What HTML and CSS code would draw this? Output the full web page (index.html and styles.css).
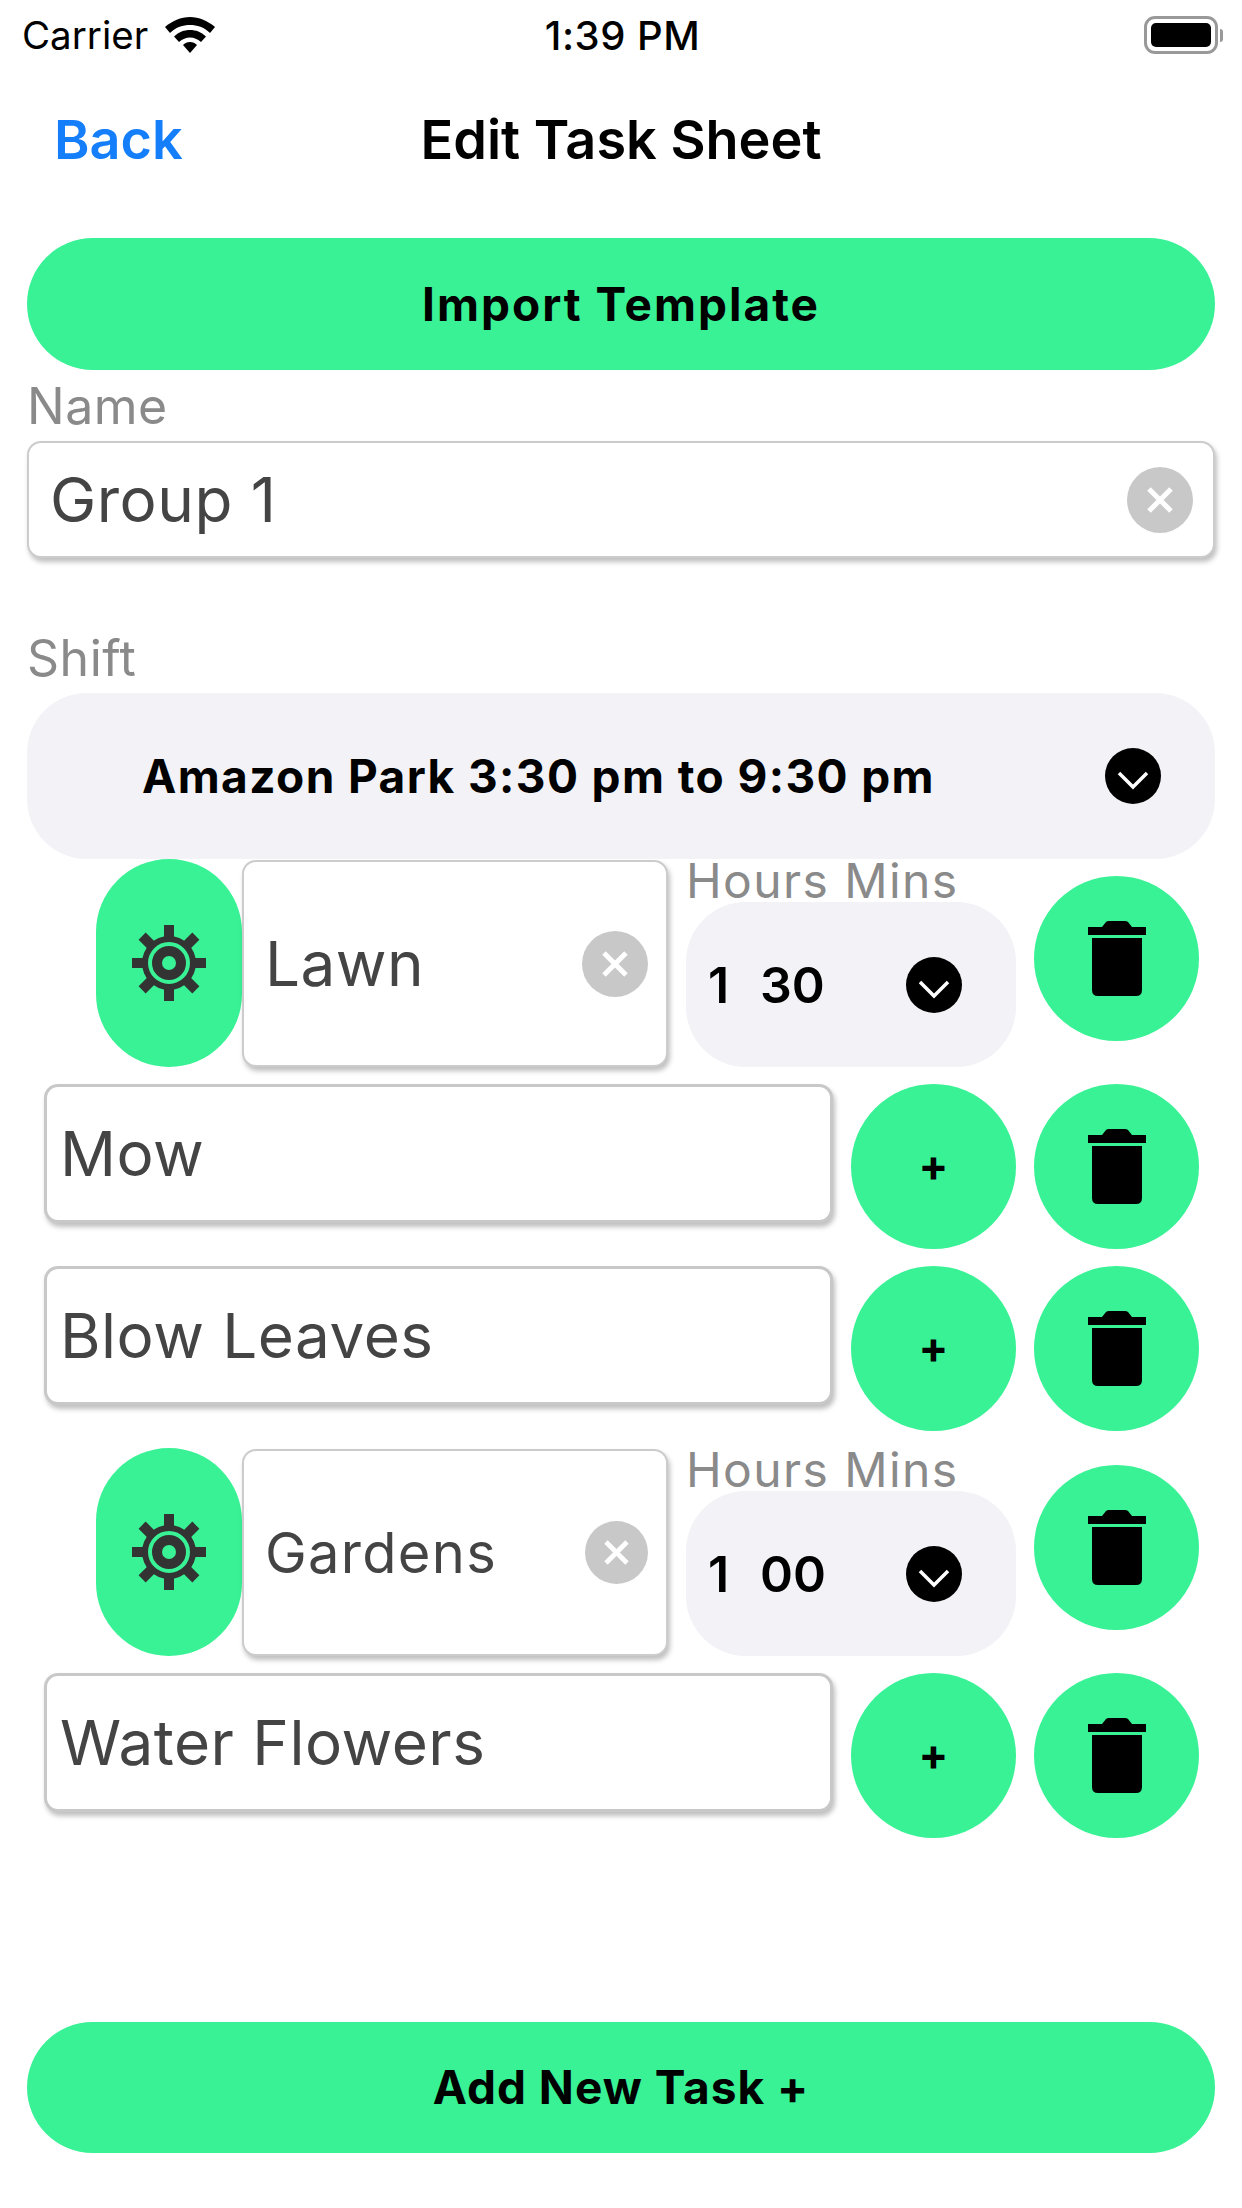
FILE: index.html
```html
<!DOCTYPE html>
<html lang="en">

<head>
    <meta charset="UTF-8">
    <meta name="viewport" content="width=device-width, initial-scale=1.0">
    <title>Edit Task Sheet</title>
    <link rel="stylesheet" href="styles.css">
</head>

<body>

    <svg class="iconDefs" aria-hidden="true">
        <symbol id="gear" viewBox="0 0 74 76">
            <g fill="#333333">
                <rect x="32" y="0" width="10" height="76"></rect>
                <rect x="32" y="0" width="10" height="76" transform="rotate(45 37 38)"></rect>
                <rect x="32" y="1" width="10" height="74" transform="rotate(90 37 38)"></rect>
                <rect x="32" y="0" width="10" height="76" transform="rotate(135 37 38)"></rect>
                <circle cx="37" cy="38" r="27"></circle>
            </g>
            <circle cx="37" cy="38" r="19" fill="none" stroke="#38f295" stroke-width="4"></circle>
            <circle cx="37" cy="38" r="7" fill="#38f295"></circle>
        </symbol>
        <symbol id="trash" viewBox="0 0 58 75">
            <path d="M0 6H14L18 1Q19 0 21 0H37Q39 0 40 1L44 6H58V14H0Z" fill="#000"></path>
            <path d="M4 17H54V69Q54 75 48 75H10Q4 75 4 69Z" fill="#000"></path>
        </symbol>
        <symbol id="chevron" viewBox="0 0 56 56">
            <circle cx="28" cy="28" r="28" fill="#000"></circle>
            <path d="M14 25L28 39L42 25" fill="none" stroke="#fff" stroke-width="3.500"></path>
        </symbol>
        <symbol id="clear" viewBox="0 0 66 66">
            <circle cx="33" cy="33" r="33" fill="#c8c8c8"></circle>
            <path d="M22 22L44 44M44 22L22 44" fill="none" stroke="#fff" stroke-width="5"></path>
        </symbol>
    </svg>

    <div class="statusBar">
        <div class="statusLeft">
            <span>Carrier</span>
            <svg class="wifiIcon" viewBox="0 0 50 36">
                <path d="M25 0C34 0 43 4 50 10L45 16C39 10 32 8 25 8C18 8 11 10 5 16L0 10C7 4 16 0 25 0Z"></path>
                <path d="M25 13C31 13 36 15 41 19.5L36 25C32.500 22 29 20.500 25 20.500C21 20.500 17.500 22 14 25L9 19.500C14 15 19 13 25 13Z"></path>
                <path d="M25 25C28 25 30 26 32 28L25 36L18 28C20 26 22 25 25 25Z"></path>
            </svg>
        </div>
        <div class="statusTime">1:39 PM</div>
        <div class="statusRight">
            <div class="battery"><div class="batteryFill"></div></div>
            <div class="batteryCap"></div>
        </div>
    </div>

    <div class="navBar">
        <a class="backLink">Back</a>
        <h1 class="navTitle">Edit Task Sheet</h1>
        <span></span>
    </div>

    <div class="content">
        <button class="pillButton">Import Template</button>

        <label class="fieldLabel">Name</label>
        <div class="textField nameField">
            <span>Group 1</span>
            <svg class="clearIcon"><use href="#clear"></use></svg>
        </div>

        <label class="fieldLabel shiftLabel">Shift</label>
        <div class="shiftSelect">
            <span>Amazon Park 3:30 pm to 9:30 pm</span>
            <svg class="chevronIcon"><use href="#chevron"></use></svg>
        </div>

        <div class="taskList">
            <div class="groupRow">
                <button class="gearButton"><svg class="gearIcon"><use href="#gear"></use></svg></button>
                <div class="textField groupField">
                    <span>Lawn</span>
                    <svg class="clearIcon"><use href="#clear"></use></svg>
                </div>
                <div class="timeBox">
                    <div class="timeLabel">Hours Mins</div>
                    <div class="timeSelect">
                        <span class="hours">1</span><span class="mins">30</span>
                        <svg class="chevronIcon"><use href="#chevron"></use></svg>
                    </div>
                </div>
                <button class="circleButton groupDelete"><svg class="trashIcon"><use href="#trash"></use></svg></button>
            </div>

            <div class="taskRow">
                <div class="textField taskField"><span>Mow</span></div>
                <button class="circleButton plusButton">+</button>
                <button class="circleButton"><svg class="trashIcon"><use href="#trash"></use></svg></button>
            </div>

            <div class="taskRow">
                <div class="textField taskField"><span>Blow Leaves</span></div>
                <button class="circleButton plusButton">+</button>
                <button class="circleButton"><svg class="trashIcon"><use href="#trash"></use></svg></button>
            </div>

            <div class="groupRow">
                <button class="gearButton"><svg class="gearIcon"><use href="#gear"></use></svg></button>
                <div class="textField groupField smallText">
                    <span>Gardens</span>
                    <svg class="clearIcon smallClear"><use href="#clear"></use></svg>
                </div>
                <div class="timeBox">
                    <div class="timeLabel">Hours Mins</div>
                    <div class="timeSelect">
                        <span class="hours">1</span><span class="mins">00</span>
                        <svg class="chevronIcon"><use href="#chevron"></use></svg>
                    </div>
                </div>
                <button class="circleButton groupDelete"><svg class="trashIcon"><use href="#trash"></use></svg></button>
            </div>

            <div class="taskRow">
                <div class="textField taskField"><span>Water Flowers</span></div>
                <button class="circleButton plusButton">+</button>
                <button class="circleButton"><svg class="trashIcon"><use href="#trash"></use></svg></button>
            </div>
        </div>

        <button class="pillButton addButton">Add New Task +</button>
    </div>

</body>

</html>
```

FILE: styles.css
```css
* {
    box-sizing: border-box;
}

body {
    font-family: 'Inter', 'Liberation Sans', sans-serif;
    background-color: #ffffff;
    color: #000000;
    width: 1242px;
    height: 2208px;
    margin: 0;
    display: flex;
    flex-direction: column;
    overflow: hidden;
}

button {
    font-family: inherit;
    border: none;
    padding: 0;
    color: #000000;
}

.iconDefs {
    position: absolute;
    width: 0;
    height: 0;
}

/* Status bar */
.statusBar {
    height: 70px;
    padding: 0 19px 0 22px;
    display: grid;
    grid-template-columns: 1fr auto 1fr;
    align-items: center;
    font-size: 38.5px;
}

.statusLeft {
    display: flex;
    align-items: center;
    gap: 17px;
}

.wifiIcon {
    width: 50px;
    height: 36px;
    fill: #000000;
}

.statusTime {
    font-size: 40px;
    font-weight: 500;
    letter-spacing: 0.5px;
}

.statusRight {
    display: flex;
    justify-content: flex-end;
    align-items: center;
    gap: 2px;
}

.battery {
    width: 74px;
    height: 38px;
    padding: 4px;
    border: 3px solid #999999;
    border-radius: 11px;
}

.batteryFill {
    height: 100%;
    background-color: #000000;
    border-radius: 5px;
}

.batteryCap {
    width: 3px;
    height: 13px;
    background-color: #999999;
    border-radius: 0 3px 3px 0;
}

/* Nav */
.navBar {
    height: 140px;
    margin-bottom: 28px;
    padding-bottom: 2px;
    display: grid;
    grid-template-columns: 1fr auto 1fr;
    align-items: center;
    font-size: 54px;
}

.backLink {
    padding-left: 54px;
    color: #147efb;
    font-weight: 600;
}

.navTitle {
    margin: 0;
    font-size: inherit;
    font-weight: 600;
}

/* Main column */
.content {
    flex: 1;
    padding: 0 27px 55px;
    display: flex;
    flex-direction: column;
}

.pillButton {
    height: 132px;
    flex-shrink: 0;
    border-radius: 66px;
    background-color: #38f295;
    font-size: 46px;
    font-weight: 700;
    letter-spacing: 2px;
}

.addButton {
    height: 131px;
    margin-top: auto;
    padding-bottom: 2px;
    letter-spacing: 1px;
}

.fieldLabel {
    height: 71px;
    display: flex;
    align-items: center;
    color: #8a8a8a;
    font-size: 50px;
    letter-spacing: 0.5px;
}

.shiftLabel {
    height: 70px;
    margin-top: 65px;
}

.textField {
    display: flex;
    align-items: center;
    justify-content: space-between;
    background-color: #ffffff;
    border: 2px solid #cccccc;
    border-radius: 14px;
    box-shadow: 2px 4px 5px rgba(0, 0, 0, 0.25);
    color: #444444;
    font-size: 62px;
    letter-spacing: 0.5px;
}

.nameField {
    height: 117px;
    padding: 0 20px 0 21px;
}

.clearIcon {
    width: 66px;
    height: 66px;
}

.shiftSelect {
    height: 166px;
    padding: 0 54px 0 115px;
    display: flex;
    align-items: center;
    justify-content: space-between;
    border-radius: 60px;
    background-color: #f2f2f7;
    font-size: 46px;
    font-weight: 700;
    letter-spacing: 1.4px;
}

.chevronIcon {
    width: 56px;
    height: 56px;
}

/* Groups and tasks */
.taskList {
    display: flex;
    flex-direction: column;
    gap: 17px;
}

.groupRow {
    padding-left: 69px;
    display: flex;
    align-items: flex-start;
}

.gearButton {
    width: 146px;
    height: 208px;
    border-radius: 73px;
    background-color: #38f295;
    display: flex;
    align-items: center;
    justify-content: center;
}

.gearIcon {
    width: 74px;
    height: 76px;
}

.groupField {
    width: 426px;
    height: 207px;
    margin-top: 1px;
    padding: 0 18px 0 21px;
}

.smallText {
    font-size: 56px;
    letter-spacing: 1.3px;
}

.smallClear {
    width: 63px;
    height: 63px;
}

.timeBox {
    width: 330px;
    margin-left: 18px;
}

.timeLabel {
    height: 43px;
    display: flex;
    align-items: center;
    color: #8a8a8a;
    font-size: 48px;
    letter-spacing: 1.4px;
    white-space: nowrap;
}

.timeSelect {
    height: 165px;
    padding: 0 54px 0 22px;
    display: flex;
    align-items: center;
    border-radius: 60px;
    background-color: #f2f2f7;
    font-size: 50px;
    font-weight: 600;
}

.hours {
    width: 52px;
}

.timeSelect .chevronIcon {
    margin-left: auto;
}

.circleButton {
    width: 165px;
    height: 165px;
    flex-shrink: 0;
    border-radius: 50%;
    background-color: #38f295;
    display: flex;
    align-items: center;
    justify-content: center;
}

.groupDelete {
    margin: 17px 0 0 18px;
}

.trashIcon {
    width: 58px;
    height: 75px;
}

.taskRow {
    padding-left: 17px;
    display: flex;
    align-items: flex-start;
    gap: 18px;
}

.taskField {
    width: 789px;
    height: 139px;
    padding-left: 13px;
    border-width: 3px;
    border-color: #c8c8c8;
}

.plusButton {
    padding-bottom: 3px;
    font-size: 44px;
    font-weight: 700;
}
```
